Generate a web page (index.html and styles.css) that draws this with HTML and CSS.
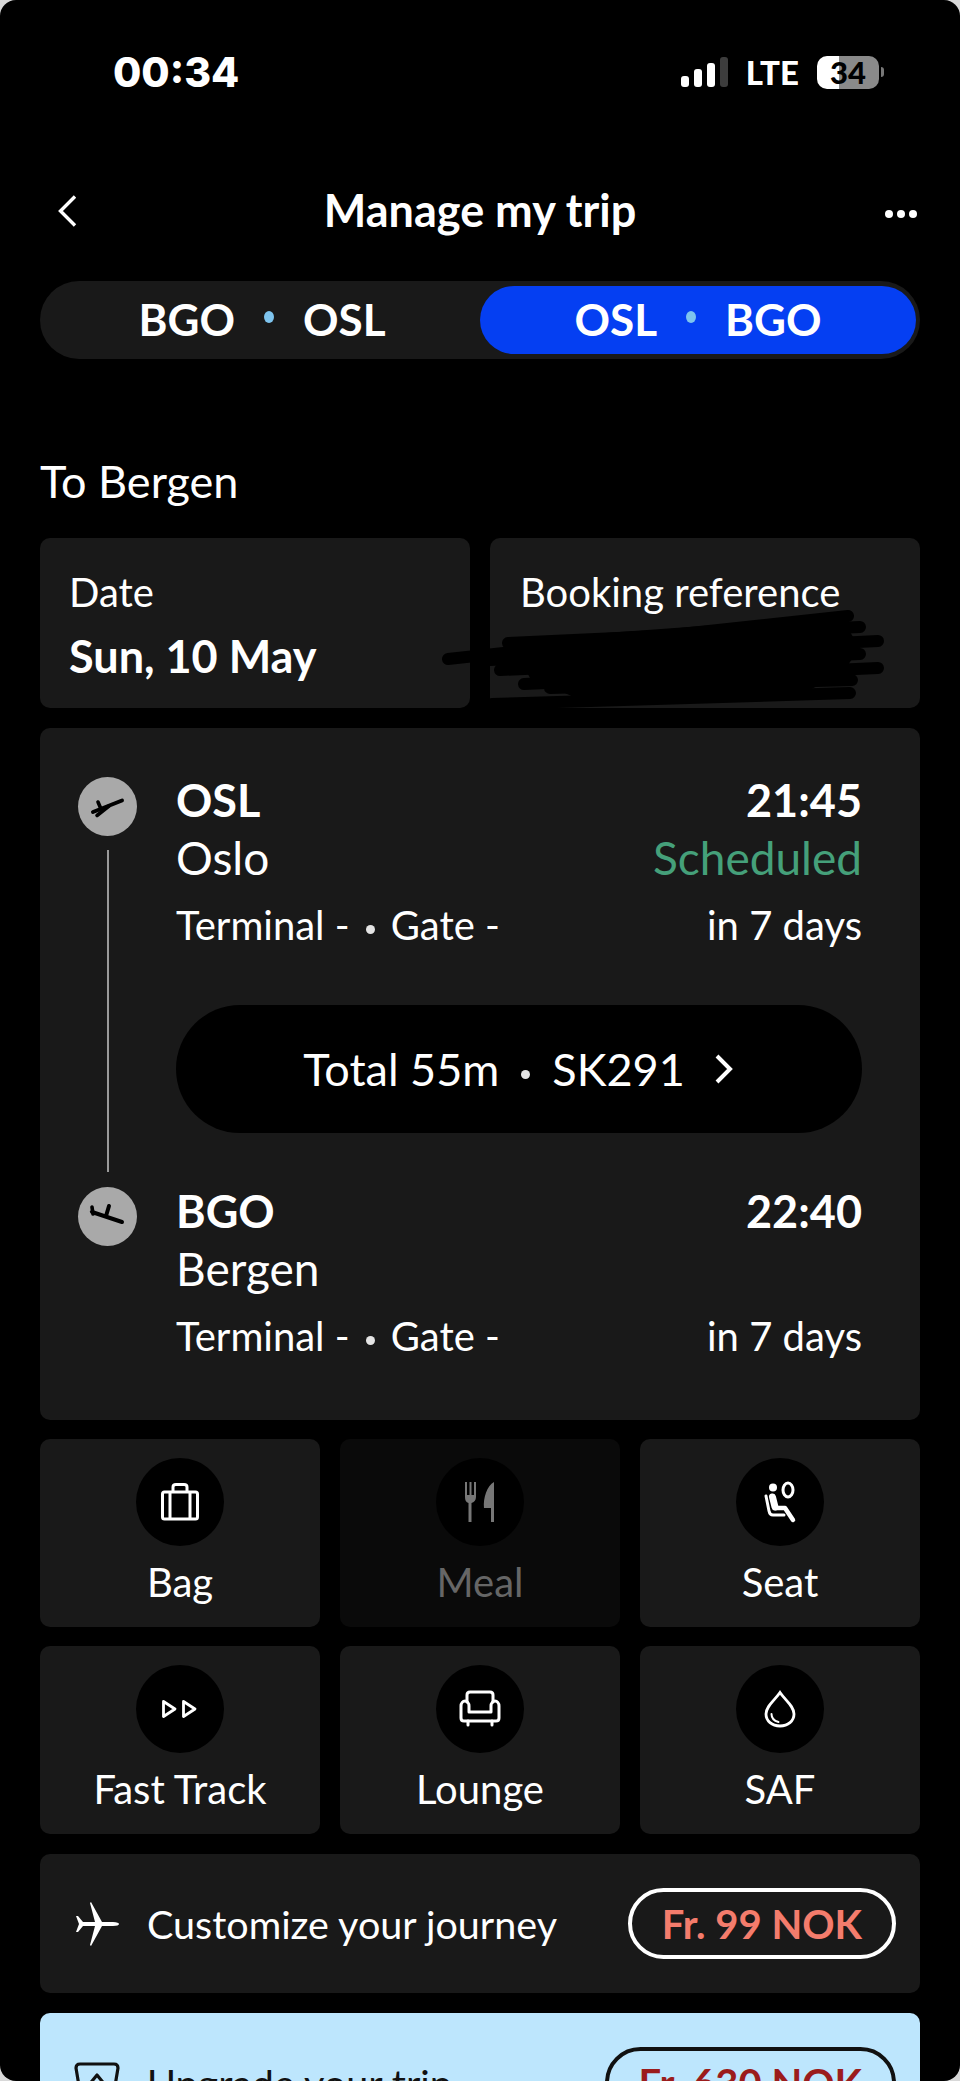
FILE: index.html
```html
<!doctype html>
<html>
<head>
<meta charset="utf-8">
<title>Manage my trip</title>
<link rel="stylesheet" href="styles.css">
</head>

<body>
<div class="screen">
	<div class="status">
		<span class="time">00:34</span>
		<div class="status-right">
			<div class="signal"><i class="b1"></i><i class="b2"></i><i class="b3"></i><i class="b4"></i></div>
			<span class="lte">LTE</span>
			<div class="battery"><span>34</span></div>
			<i class="battery-tip"></i>
		</div>
	</div>

	<div class="nav">
		<svg class="back" width="19" height="32" viewBox="0 0 19 32"><path d="M17 1.500 2.500 16 17 30.500" fill="none" stroke="#fff" stroke-width="3.400"/></svg>
		<h1>Manage my trip</h1>
		<div class="more"><i></i><i></i><i></i></div>
	</div>

	<div class="tabs">
		<div class="tab"><span>BGO</span><i></i><span>OSL</span></div>
		<div class="tab active"><span>OSL</span><i></i><span>BGO</span></div>
	</div>

	<h2 class="dest">To Bergen</h2>

	<div class="info">
		<div class="card info-card">
			<div class="label">Date</div>
			<div class="value">Sun, 10 May</div>
		</div>
		<div class="card info-card ref">
			<div class="label">Booking reference</div>
			<svg class="scribble" width="450" height="100" viewBox="0 0 450 100">
				<polygon points="70,32 400,8 420,40 400,68 360,86 150,96 90,70" fill="#000"/>
				<g stroke="#000" stroke-width="12" stroke-linecap="round" fill="none">
					<path d="M8 51 408 8"/>
					<path d="M68 35 420 19"/>
					<path d="M50 52 438 33"/>
					<path d="M60 62 420 46"/>
					<path d="M84 76 438 60"/>
					<path d="M110 80 412 72"/>
					<path d="M52 96 410 85"/>
				</g>
			</svg>
		</div>
	</div>

	<div class="card flight">
		<div class="timeline">
			<div class="node">
				<svg width="59" height="59" viewBox="0 0 59 59"><g fill="none" stroke="#000" stroke-linecap="round"><path d="M15 35 44 23.500" stroke-width="4"/><path d="M31 29 19 38.500" stroke-width="3.600"/><path d="M20 25 23 32" stroke-width="3.600"/></g></svg>
			</div>
			<div class="line"></div>
			<div class="node">
				<svg width="59" height="59" viewBox="0 0 59 59"><g fill="none" stroke="#000" stroke-linecap="round"><path d="M14 25 44 35" stroke-width="4"/><path d="M28 29 31 19" stroke-width="4"/><path d="M14 20 15 27" stroke-width="3.600"/></g></svg>
			</div>
		</div>
		<div class="legs">
			<div class="stop">
				<div class="row code"><span>OSL</span><span>21:45</span></div>
				<div class="row city"><span>Oslo</span><span class="scheduled">Scheduled</span></div>
				<div class="row meta"><span>Terminal -<i class="sep"></i>Gate -</span><span>in 7 days</span></div>
			</div>
			<div class="total">
				<span>Total 55m<i class="sep"></i>SK291</span>
				<svg width="22" height="32" viewBox="0 0 22 32"><path d="M4 3 17 16 4 29" fill="none" stroke="#fff" stroke-width="4"/></svg>
			</div>
			<div class="stop">
				<div class="row code"><span>BGO</span><span>22:40</span></div>
				<div class="row city"><span>Bergen</span></div>
				<div class="row meta"><span>Terminal -<i class="sep"></i>Gate -</span><span>in 7 days</span></div>
			</div>
		</div>
	</div>

	<div class="services">
		<div class="card service">
			<div class="circle"><svg width="44" height="44" viewBox="0 0 44 44"><g fill="none" stroke="#fff" stroke-width="3" stroke-linejoin="round"><rect x="4.500" y="12" width="35" height="27" rx="2"/><path d="M12 12V39M32 12V39M15 12V7C15 5.500 16 4.500 18 4.500H26C28 4.500 29 5.500 29 7V12"/></g></svg></div>
			<div class="name">Bag</div>
		</div>
		<div class="card service off">
			<div class="circle"><svg width="44" height="44" viewBox="0 0 44 44" fill="#777"><path d="M7 2h2v13h2.500V2h2v13H16V2h2v15c0 3-2 5.500-4.500 6v19h-3V23C8 22.500 7 20 7 17Z"/><path d="M36 2v40h-3V28h-7c-1-10 3-22 10-26Z"/></svg></div>
			<div class="name">Meal</div>
		</div>
		<div class="card service">
			<div class="circle"><svg width="44" height="44" viewBox="0 0 44 44"><circle cx="15" cy="7.500" r="4" fill="#fff"/><ellipse cx="30" cy="10" rx="5" ry="7" fill="none" stroke="#fff" stroke-width="3"/><path d="M14.500 17 17 27" fill="none" stroke="#fff" stroke-width="7" stroke-linecap="round"/><path d="M17 28H27L35 40" fill="none" stroke="#fff" stroke-width="4.500" stroke-linecap="round" stroke-linejoin="round"/><path d="M8 16 11 31C11.500 33.500 13 35 15 35H26" fill="none" stroke="#fff" stroke-width="3" stroke-linecap="round"/></svg></div>
			<div class="name">Seat</div>
		</div>
		<div class="card service">
			<div class="circle"><svg width="44" height="44" viewBox="0 0 44 44"><g fill="none" stroke="#fff" stroke-width="2.800" stroke-linejoin="round"><path d="M5.500 14.500 17 22 5.500 29.500Z"/><path d="M25.500 14.500 37 22 25.500 29.500Z"/></g></svg></div>
			<div class="name">Fast Track</div>
		</div>
		<div class="card service">
			<div class="circle"><svg width="44" height="44" viewBox="0 0 44 44"><g fill="none" stroke="#fff" stroke-width="3" stroke-linejoin="round" stroke-linecap="round"><path d="M9 15V8c0-2 1-3 3-3h20c2 0 3 1 3 3v7"/><path d="M11 25H33V19c0-3 2-5 4-5s4 2 4 5V31c0 2-1 3-3 3H6c-2 0-3-1-3-3V19c0-3 2-5 4-5s4 2 4 5Z"/><path d="M10 34v4M34 34v4"/></g></svg></div>
			<div class="name">Lounge</div>
		</div>
		<div class="card service">
			<div class="circle"><svg width="44" height="44" viewBox="0 0 44 44"><g fill="none" stroke="#fff" stroke-width="2.800" stroke-linecap="round"><path d="M22 5.500C17 13 8 19 8 27c0 7 6 12 14 12s14-5 14-12C36 19 27 13 22 5.500Z"/><path d="M13.500 27c0 4 3 7 7 8" stroke-width="2"/></g></svg></div>
			<div class="name">SAF</div>
		</div>
	</div>

	<div class="card offer">
		<svg class="offer-icon" width="46" height="46" viewBox="0 0 46 46"><path d="M45 23C45 22 43 21 39 21H28L17 1 16 2 21 21H9L4 15H2L5 23 2 31H4L9 25H21L16 44 17 45 28 25H39C43 25 45 24 45 23Z" fill="#fff"/></svg>
		<span class="offer-text">Customize your journey</span>
		<span class="price">Fr. 99 NOK</span>
	</div>

	<div class="card offer upgrade">
		<svg class="offer-icon" width="46" height="46" viewBox="0 0 46 46"><g fill="none" stroke="#111" stroke-width="3.200" stroke-linejoin="round"><path d="M8 44 2 8c0-2 1-4 4-4H40c3 0 4 2 4 4L38 44"/><path d="M14 26 23 15 32 26"/><path d="M14 40H32"/></g></svg>
		<span class="offer-text">Upgrade your trip</span>
		<span class="price">Fr. 630 NOK</span>
	</div>
</div>
</body>
</html>
```

FILE: styles.css
```css
*{
	margin:0;
	padding:0;
	box-sizing:border-box;
}
html,body{
	height:100%;
	overflow:hidden;
	background:#d8d8d8;
}
body{
	font-family:Lato,"Noto Sans",sans-serif;
	color:#fff;
}
i{
	font-style:normal;
}
.screen{
	height:2081px;
	padding:44px 40px 0;
	background:#000;
	border-radius:16px;
	overflow:hidden;
}

.status{
	height:56px;
	padding-left:73px;
	display:flex;
	align-items:center;
	justify-content:space-between;
}
.time{
	font-family:Inter,sans-serif;
	font-size:41px;
	font-weight:800;
}
.status-right{
	display:flex;
	align-items:center;
	padding-right:36px;
}
.signal{
	display:flex;
	align-items:flex-end;
	gap:5px;
	height:30px;
}
.signal i{
	width:8px;
	border-radius:3px;
	background:#fff;
}
.signal .b1{height:11px;}
.signal .b2{height:18px;}
.signal .b3{height:24px;}
.signal .b4{height:30px;background:#3d3d3d;}
.lte{
	margin-left:18px;
	font-size:33px;
	font-weight:900;
	line-height:1;
}
.battery{
	width:62px;
	height:33px;
	margin-left:18px;
	border-radius:10px;
	background:linear-gradient(90deg,#fff 35%,#8a8a8a 35%);
	color:#000;
	font-size:31px;
	font-weight:900;
	line-height:33px;
	text-align:center;
}
.battery-tip{
	width:3px;
	height:10px;
	margin-left:2px;
	border-radius:0 3px 3px 0;
	background:#777;
}

.nav{
	height:44px;
	margin-top:88px;
	display:grid;
	grid-template-columns:1fr auto 1fr;
	align-items:center;
}
.back{
	margin-left:18px;
}
.nav h1{
	padding-bottom:2px;
	font-size:45px;
	font-weight:700;
	line-height:44px;
}
.more{
	justify-self:end;
	display:flex;
	gap:4px;
	margin-right:3px;
	padding-top:6px;
}
.more i{
	width:8px;
	height:8px;
	border-radius:50%;
	background:#fff;
}

.tabs{
	height:78px;
	margin-top:49px;
	padding:5px 4px;
	display:grid;
	grid-template-columns:1fr 1fr;
	background:#191919;
	border-radius:39px;
}
.tab{
	padding-bottom:3px;
	display:flex;
	align-items:center;
	justify-content:center;
	gap:29px;
	border-radius:34px;
	font-size:44px;
	font-weight:700;
}
.tab i{
	width:10px;
	height:12px;
	margin-top:-3px;
	border-radius:50%;
	background:#7ec4ee;
}
.tab.active{
	background:#053ff2;
}

.dest{
	margin-top:97px;
	font-size:45px;
	font-weight:400;
	line-height:50px;
}

.card{
	background:#191919;
	border-radius:10px;
}
.info{
	margin-top:32px;
	display:grid;
	grid-template-columns:1fr 1fr;
	gap:20px;
}
.info-card{
	height:170px;
	padding:32px 30px 0 29px;
}
.label{
	font-size:40px;
	line-height:44px;
}
.value{
	margin-top:20px;
	font-size:45px;
	font-weight:700;
	line-height:44px;
}
.ref{
	position:relative;
}
.ref .label{
	padding-left:1px;
}
.scribble{
	position:absolute;
	left:-50px;
	top:70px;
}

.flight{
	height:692px;
	margin-top:20px;
	padding:44px 58px 0 38px;
	display:flex;
	gap:39px;
}
.timeline{
	width:59px;
	padding-top:5px;
	display:flex;
	flex-direction:column;
	align-items:center;
}
.node{
	width:59px;
	height:59px;
	border-radius:50%;
	background:#a9a9a9;
}
.node svg{
	display:block;
}
.line{
	width:2px;
	height:322px;
	margin:14px 0 15px;
	background:#9a9a9a;
}
.legs{
	flex:1;
}
.row{
	display:flex;
	justify-content:space-between;
}
.code{
	font-size:45px;
	font-weight:700;
	line-height:56px;
}
.city{
	margin-top:1px;
	font-size:46px;
	line-height:58px;
}
.meta{
	margin-top:12px;
	font-size:40px;
	line-height:52px;
}
.scheduled{
	color:#45a07a;
}
.sep{
	display:inline-block;
	width:9px;
	height:9px;
	margin:0 16px;
	vertical-align:middle;
	border-radius:50%;
	background:#e4e4e4;
}
.total{
	height:128px;
	margin:54px 0 50px;
	display:flex;
	align-items:center;
	justify-content:center;
	gap:28px;
	background:#000;
	border-radius:64px;
	font-size:45px;
}
.total .sep{
	margin:0 22px;
}

.services{
	margin-top:19px;
	display:grid;
	grid-template-columns:repeat(3,1fr);
	gap:19px 20px;
}
.service{
	height:188px;
	padding-top:19px;
	display:flex;
	flex-direction:column;
	align-items:center;
}
.circle{
	width:88px;
	height:88px;
	display:flex;
	align-items:center;
	justify-content:center;
	background:#000;
	border-radius:50%;
}
.name{
	margin-top:12px;
	font-size:40px;
	line-height:48px;
}
.off{
	background:#0a0a0a;
}
.off .name{
	color:#666;
}

.offer{
	height:139px;
	margin-top:20px;
	padding:0 24px 0 34px;
	display:flex;
	align-items:center;
}
.offer-text{
	margin-left:27px;
	flex:1;
	font-size:39.500px;
}
.price{
	height:71px;
	padding:0 30px;
	display:flex;
	align-items:center;
	border:4px solid #fff;
	border-radius:36px;
	color:#f47c6c;
	font-size:40px;
	font-weight:700;
}
.upgrade{
	background:#bde6fd;
	color:#111;
}
.upgrade .price{
	border-color:#111;
	color:#9b1c1c;
}
```
